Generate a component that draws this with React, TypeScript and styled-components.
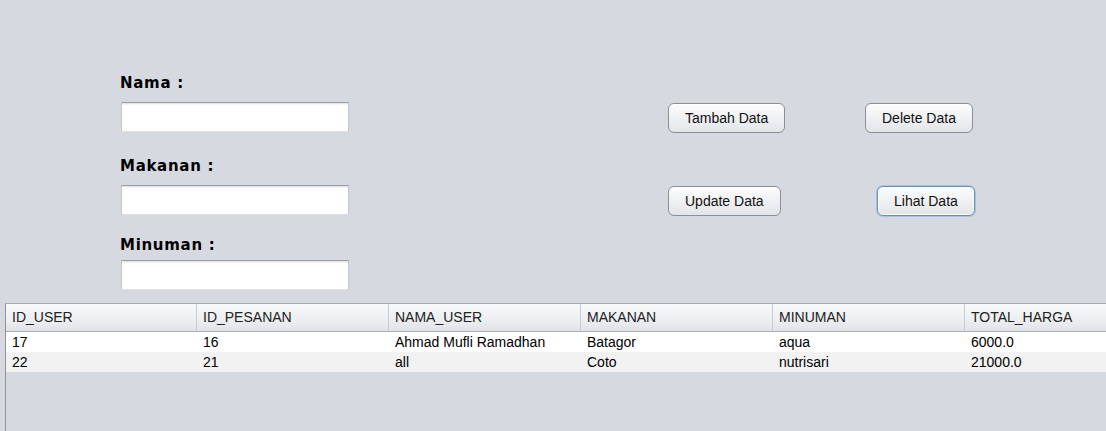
import styled, { createGlobalStyle } from 'styled-components';

const GlobalStyle = createGlobalStyle`
  html, body {
    margin: 0;
    padding: 0;
    background: #d6d9df;
    overflow: hidden;
  }
  #root {
    width: 1106px;
    height: 431px;
    overflow: hidden;
  }
`;

const columns = ['ID_USER', 'ID_PESANAN', 'NAMA_USER', 'MAKANAN', 'MINUMAN', 'TOTAL_HARGA'];

const rows = [
  ['17', '16', 'Ahmad Mufli Ramadhan', 'Batagor', 'aqua', '6000.0'],
  ['22', '21', 'all', 'Coto', 'nutrisari', '21000.0'],
];

export default function App(): JSX.Element {
  return (
    <Page>
      <GlobalStyle />
      <TopArea>
        <FormColumn>
          <FieldLabel $gap={74}>Nama :</FieldLabel>
          <TextField type="text" />
          <FieldLabel $gap={25}>Makanan :</FieldLabel>
          <TextField type="text" />
          <FieldLabel $gap={21}>Minuman :</FieldLabel>
          <TextField type="text" $gap={6} />
        </FormColumn>
        <ButtonGrid>
          <ActionButton>Tambah Data</ActionButton>
          <ActionButton>Delete Data</ActionButton>
          <ActionButton>Update Data</ActionButton>
          <ActionButton $offset={12} $focused>
            Lihat Data
          </ActionButton>
        </ButtonGrid>
      </TopArea>
      <ScrollPane>
        <Table>
          <HeaderRow>
            {columns.map((c) => (
              <HeaderCell key={c}>{c}</HeaderCell>
            ))}
          </HeaderRow>
          {rows.map((r, i) => (
            <DataRow key={i} $alt={i % 2 === 1}>
              {r.map((v, j) => (
                <Cell key={j}>{v}</Cell>
              ))}
            </DataRow>
          ))}
        </Table>
      </ScrollPane>
    </Page>
  );
}

const Page = styled.div`
  display: flex;
  flex-direction: column;
  width: 1106px;
  height: 431px;
  background: #d6d9df;
  font-family: 'Liberation Sans', Arial, sans-serif;
`;

const TopArea = styled.div`
  display: flex;
  height: 303px;
  flex-shrink: 0;
`;

const FormColumn = styled.div`
  display: flex;
  flex-direction: column;
  margin-left: 121px;
  width: 229px;
`;

const FieldLabel = styled.div<{ $gap: number }>`
  margin-top: ${(p) => p.$gap}px;
  margin-left: -1px;
  height: 18px;
  line-height: 18px;
  font-family: 'DejaVu Sans', Verdana, sans-serif;
  font-weight: bold;
  font-size: 15px;
  letter-spacing: 0.7px;
  color: #000;
`;

const TextField = styled.input<{ $gap?: number }>`
  box-sizing: border-box;
  margin-top: ${(p) => p.$gap ?? 10}px;
  width: 228px;
  height: 30px;
  border: 1px solid #c4c7cd;
  border-top-color: #9a9ea5;
  border-bottom-color: #dcdfe3;
  background: #fff;
  box-shadow: inset 0 2px 2px -1px rgba(0, 0, 0, 0.15);
  outline: none;
`;

const ButtonGrid = styled.div`
  display: grid;
  grid-template-columns: 197px auto;
  grid-template-rows: 30px 30px;
  row-gap: 53px;
  align-content: start;
  justify-items: start;
  margin-left: 318px;
  padding-top: 103px;
`;

const ActionButton = styled.button<{ $offset?: number; $focused?: boolean }>`
  box-sizing: border-box;
  height: 30px;
  margin-left: ${(p) => p.$offset ?? 0}px;
  padding: 0 16px;
  font-family: 'Liberation Sans', Arial, sans-serif;
  font-size: 14px;
  color: #111;
  border-radius: 6px;
  border: 1px solid ${(p) => (p.$focused ? '#6e8fb4' : '#8a9099')};
  background: linear-gradient(#fdfdfd 0%, #f1f2f4 45%, #e2e5e9 100%);
  box-shadow: ${(p) =>
    p.$focused ? '0 0 0 1px #a9c2de, inset 0 0 0 1px #fff' : 'inset 0 1px 0 #fff'};
`;

const ScrollPane = styled.div`
  flex: 1;
  margin-left: 5px;
  border-left: 1px solid #8f9298;
  border-top: 1px solid #a6aab1;
  background: #d6d9df;
  overflow: hidden;
`;

const Table = styled.div`
  display: flex;
  flex-direction: column;
  width: 1152px;
`;

const HeaderRow = styled.div`
  display: grid;
  grid-template-columns: 191px repeat(5, 192px);
  height: 27px;
  background: linear-gradient(#f8f9fa 0%, #eceef1 60%, #e1e3e7 100%);
  border-bottom: 1px solid #a9adb4;
`;

const HeaderCell = styled.div`
  box-sizing: border-box;
  padding-left: 6px;
  line-height: 27px;
  font-size: 14px;
  color: #222;
  border-right: 1px solid #c7cad0;
`;

const DataRow = styled.div<{ $alt: boolean }>`
  display: grid;
  grid-template-columns: 191px repeat(5, 192px);
  height: 20px;
  background: ${(p) => (p.$alt ? '#f2f2f2' : '#ffffff')};
`;

const Cell = styled.div`
  padding-left: 6px;
  line-height: 20px;
  font-size: 14px;
  color: #000;
`;
